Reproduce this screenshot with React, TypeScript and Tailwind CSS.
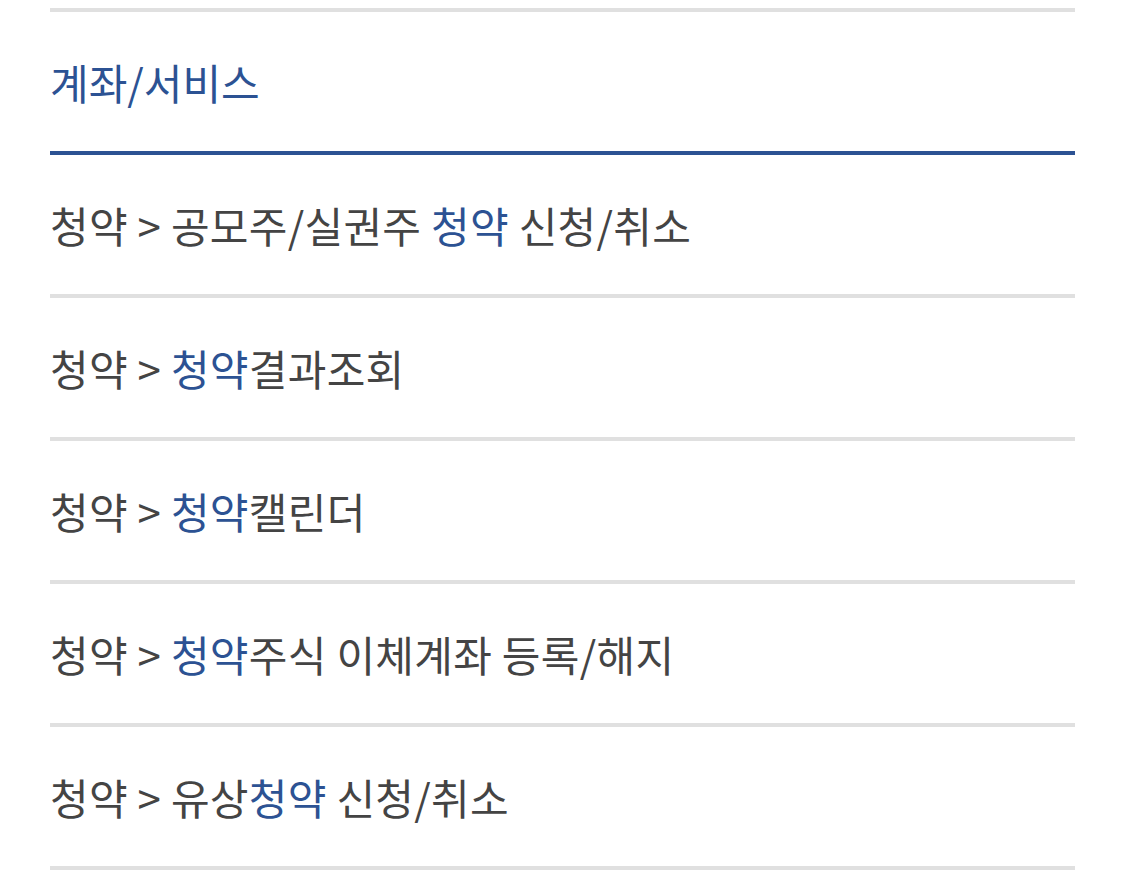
import React from "react";

const B = ({ children }: { children: React.ReactNode }) => (
  <span className="text-[#2c5293]">{children}</span>
);

const rows: React.ReactNode[] = [
  <>청약 &gt; 공모주/실권주 <B>청약</B> 신청/취소</>,
  <>청약 &gt; <B>청약</B>결과조회</>,
  <>청약 &gt; <B>청약</B>캘린더</>,
  <>청약 &gt; <B>청약</B>주식 이체계좌 등록/해지</>,
  <>청약 &gt; 유상<B>청약</B> 신청/취소</>,
];

export default function App() {
  return (
    <div
      className="w-[1125px] h-[883px] bg-white overflow-hidden"
      style={{ fontFamily: '"Noto Sans CJK KR", "Noto Sans", sans-serif' }}
    >
      <div className="mx-[50px] pt-[8px]">
        <div className="border-t-4 border-[#e0e0e0] h-[147px] flex items-center border-b-4 border-b-[#2c5293]">
          <span className="text-[42px] leading-none text-[#2c5293]">계좌/서비스</span>
        </div>
        {rows.map((r, i) => (
          <div
            key={i}
            className="h-[143px] border-b-4 border-[#e0e0e0] flex items-center pt-[1px] text-[42px] leading-none tracking-[0.3px] text-[#444444]"
          >
            <span>{r}</span>
          </div>
        ))}
      </div>
    </div>
  );
}
